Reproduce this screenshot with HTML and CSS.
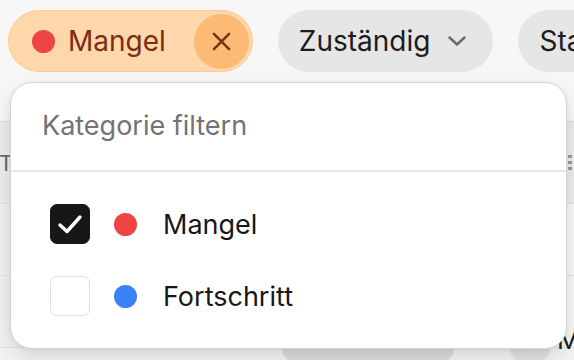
FILE: index.html
```html
<!DOCTYPE html>
<html lang="de">
<head>
<meta charset="utf-8">
<link rel="stylesheet" href="styles.css">
</head>
<body>
<div class="page">
  <div class="toolbar">
    <div class="chip chip-active">
      <span class="dot dot-red"></span>
      <span class="chip-label">Mangel</span>
      <span class="chip-close">
        <svg width="20" height="20" viewBox="0 0 20 20"><path d="M2 2L18 18M18 2L2 18" stroke="#7c2d12" stroke-width="2.6" stroke-linecap="round" fill="none"/></svg>
      </span>
    </div>
    <div class="chip chip-plain">
      <span class="chip-label">Zuständig</span>
      <svg class="chev" width="18" height="10" viewBox="0 0 18 10"><path d="M1.5 1.5L9 8.5L16.5 1.5" stroke="#6b6b6b" stroke-width="2.4" stroke-linecap="round" stroke-linejoin="round" fill="none"/></svg>
    </div>
    <div class="chip chip-plain">
      <span class="chip-label">Status</span>
    </div>
  </div>

  <div class="table">
    <div class="thead">
      <span class="th th-first">Titel</span>
      <span class="th-handle"></span>
    </div>
    <div class="tbody">
      <div class="trow">
        <div class="td td1"></div>
        <div class="td td2"></div>
        <div class="td td3"></div>
      </div>
      <div class="trow trow-last">
        <div class="td td1"></div>
        <div class="td td2"><span class="pill"></span></div>
        <div class="td td3"><span class="pill pill-small"></span><span class="cell-text">M</span></div>
      </div>
    </div>
  </div>

  <div class="dropdown">
    <div class="dd-head">Kategorie filtern</div>
    <div class="dd-list">
      <div class="dd-row">
        <span class="cb cb-on">
          <svg width="40" height="40" viewBox="0 0 40 40"><path d="M10 21L17 27.5L30 13" stroke="#fff" stroke-width="3.4" stroke-linecap="round" stroke-linejoin="round" fill="none"/></svg>
        </span>
        <span class="dot dot-red"></span>
        <span class="dd-label">Mangel</span>
      </div>
      <div class="dd-row">
        <span class="cb"></span>
        <span class="dot dot-blue"></span>
        <span class="dd-label">Fortschritt</span>
      </div>
    </div>
  </div>
</div>
</body>
</html>
```

FILE: styles.css
```css
* { box-sizing: border-box; }
html, body { margin: 0; padding: 0; }
body {
  background: #f3f3f3;
  font-family: Inter, "Noto Sans", "DejaVu Sans", sans-serif;
  overflow: hidden;
  width: 574px;
  height: 360px;
}
.page { position: relative; width: 574px; height: 360px; overflow: hidden; }

.toolbar {
  height: 122px;
  background: #f7f7f7;
  border-bottom: 1px solid #dcdcdc;
  display: flex;
  align-items: flex-start;
  gap: 25px;
  padding: 10px 0 0 8px;
  white-space: nowrap;
}
.chip {
  height: 62px;
  border-radius: 31px;
  display: flex;
  align-items: center;
  flex-shrink: 0;
  font-size: 28px;
  line-height: 1;
}
.chip-active {
  background: #fed7aa;
  border: 1px solid #fdcb94;
  padding: 0 3px 0 23px;
  color: #7c2d12;
}
.chip-active .dot { margin-right: 13px; }
.chip-active .chip-label { margin-right: 28px; }
.chip-close {
  width: 55px; height: 55px;
  border-radius: 50%;
  background: #fdba74;
  display: flex; align-items: center; justify-content: center;
}
.chip-close svg { width: 19px; height: 19px; }
.chip-plain {
  background: #e6e6e6;
  color: #1c1c1c;
  padding: 0 27px 0 21px;
}
.chip-plain .chev { margin-left: 18px; }

.dot { width: 23px; height: 23px; border-radius: 50%; flex-shrink: 0; display: inline-block; }
.dot-red { background: #ef4444; }
.dot-blue { background: #3b82f6; }

.table { display: flex; flex-direction: column; }
.thead {
  height: 82px;
  background: #ececec;
  border-bottom: 1px solid #e2e2e2;
  display: flex;
  align-items: center;
  justify-content: space-between;
  font-size: 22px;
  color: #6b6b6b;
}
.th-first { margin-left: -1px; text-transform: uppercase; letter-spacing: 1px; }
.th-handle {
  width: 4px; height: 16px; margin-right: 2px;
  background: repeating-linear-gradient(#9a9a9a 0 3px, transparent 3px 6px);
}
.tbody { display: flex; flex-direction: column; }
.trow { display: flex; height: 72px; border-bottom: 1px solid #e4e4e4; }
.td { height: 100%; display: flex; align-items: flex-end; }
.td1 { width: 260px; border-right: 1px solid #d8d8d8; background: #f1f1f1; }
.td2 { width: 223px; border-right: 1px solid #d8d8d8; background: #f7f7f7; padding-left: 22px; }
.td3 { flex: 1; background: #f7f7f7; padding-left: 27px; position: relative; }
.pill { display: block; width: 172px; height: 30px; border-radius: 15px; background: #dcdcdc; margin-bottom: -16px; }
.pill-small { width: 40px; background: #e2e2e2; }
.cell-text { position: absolute; left: 74px; bottom: -8px; font-size: 26px; color: #1c1c1c; }

.dropdown {
  position: absolute;
  left: 10px;
  top: 82px;
  width: 557px;
  height: 267px;
  background: #fff;
  border: 1px solid #d4d4d4;
  border-radius: 22px;
  box-shadow: 0 10px 24px rgba(0,0,0,0.10), 0 2px 6px rgba(0,0,0,0.06);
  overflow: hidden;
}
.dd-head {
  height: 89px;
  border-bottom: 2px solid #e6e6e6;
  display: flex;
  align-items: center;
  padding-left: 31px;
  padding-bottom: 2px;
  font-size: 27px;
  color: #737373;
}
.dd-list { padding: 16px 0; display: flex; flex-direction: column; }
.dd-row {
  height: 72px;
  display: flex;
  align-items: center;
  padding-left: 39px;
}
.cb {
  width: 40px; height: 40px;
  border-radius: 7px;
  border: 1.5px solid #e0e0e0;
  background: #fff;
  flex-shrink: 0;
  margin-right: 24px;
  display: flex;
}
.cb-on { background: #171717; border-color: #171717; }
.cb-on svg { margin: -1.5px; }
.dd-row .dot { margin-right: 26px; }
.dd-label { font-size: 27px; color: #171717; }
```
